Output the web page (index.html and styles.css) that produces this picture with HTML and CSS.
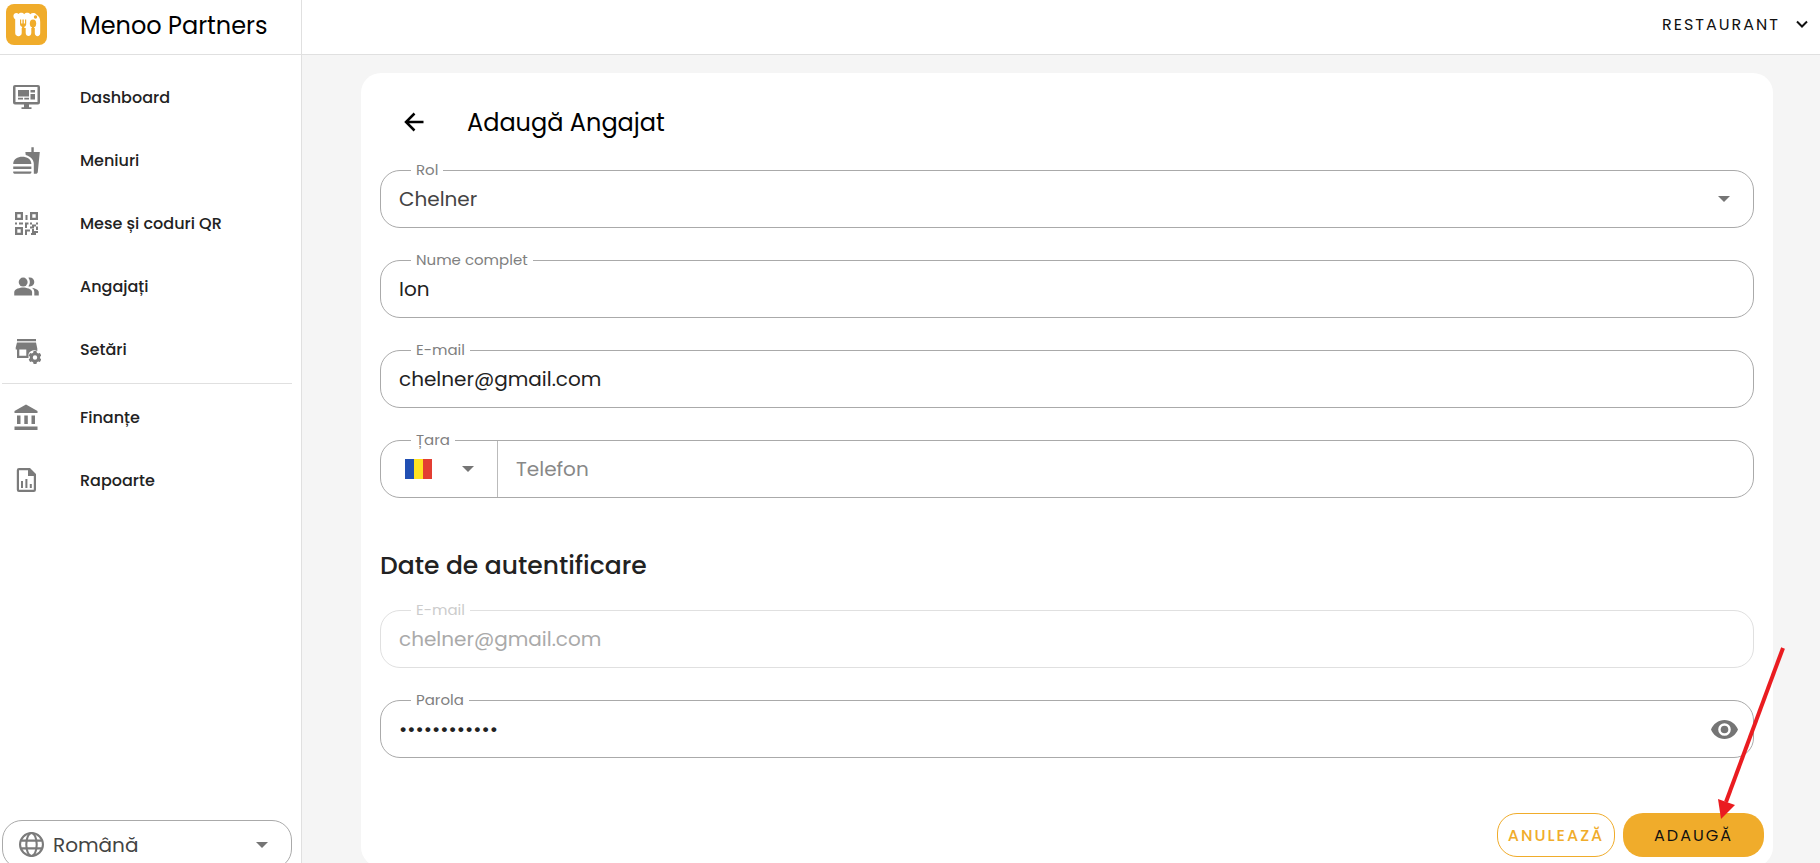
FILE: index.html
```html
<!DOCTYPE html>
<html lang="ro">
<head>
    <meta charset="UTF-8">
    <meta name="viewport" content="width=device-width, initial-scale=1.0">
    <title>Menoo Partners</title>
    <link rel="stylesheet" href="styles.css">
</head>
<body>
    <aside class="sidebar">
        <div class="brand">
            <svg class="logo" viewBox="0 0 41 41" aria-hidden="true">
                <rect width="41" height="41" rx="8" fill="#f0ac2b"/>
                <path fill="#fff" d="M9.200 15.200C6.500 13.500 7 9 10.300 9c1 0 1.700.400 2.200 1 1.300-1.700 4.300-1.700 5.700.200 1.500-1.900 4.600-1.900 6 0 1.800-1.500 4.600-1.500 6.200.300 2.800 1.800 3.800 4 3.800 7.500V29c0 4.200-5.400 4.200-5.400 0V24h-3.500v5c0 4-5.600 4-5.600 0v-5h-4v5c0 4.200-6.500 4.200-6.500 0z"/>
                <path fill="#f0ac2b" d="M14 15.500h1.200v4h1.200v-4h1.400v4H19v-4h1.200V20c0 1.600-.7 2.400-1.900 2.800V32h-2.200v-9.200c-1.300-.4-2.100-1.200-2.100-2.800z"/>
                <ellipse cx="27" cy="19.500" rx="3.200" ry="4" fill="#f0ac2b"/>
                <path fill="#f0ac2b" d="M26 22h2v10h-2z"/>
                <circle cx="29.500" cy="13" r="1.700" fill="#f0ac2b"/>
            </svg>
            <span class="brand-name">Menoo Partners</span>
        </div>

        <nav class="menu">
            <a class="menu-item" href="#">
                <svg class="icon" viewBox="0 0 29 29" aria-hidden="true">
                    <path fill-rule="evenodd" d="M3 2h23a2 2 0 0 1 2 2v15.500a2 2 0 0 1-2 2H17v2.800h2.500V26h-10v-1.700H12v-2.800H3a2 2 0 0 1-2-2V4a2 2 0 0 1 2-2zm.5 2v15h22V4z"/>
                    <path d="M6 7h11v6.500H6zM18.500 7H23v2.500h-4.500zM18.500 11H23v5.500h-4.500zM6 14.800h5v1.700H6zM12.300 14.800H17v1.700h-4.700z"/>
                </svg>
                <span>Dashboard</span>
            </a>
            <a class="menu-item" href="#">
                <svg class="icon" viewBox="0 0 24 24" aria-hidden="true">
                    <path d="M18.060 22.990h1.660c.840 0 1.530-.640 1.630-1.460L23 5.050h-5V1h-1.970v4.050h-4.970l.3 2.340c1.710.470 3.310 1.320 4.270 2.260 1.440 1.420 2.430 2.890 2.430 5.290v8.050zM1 21.990V21h15.030v.990c0 .550-.450 1-1.010 1H2.010c-.560 0-1.010-.450-1.010-1zm15.030-7c0-8-15.030-8-15.030 0h15.030zM1.020 17h15v2h-15z"/>
                </svg>
                <span>Meniuri</span>
            </a>
            <a class="menu-item" href="#">
                <svg class="icon" viewBox="0 0 29 29" aria-hidden="true">
                    <path fill-rule="evenodd" d="M3 3h8v8H3zm2.300 2.300v3.400h3.400V5.300zM18 3h8v8h-8zm2.300 2.300v3.400h3.400V5.300zM3 18h8v8H3zm2.300 2.300v3.400h3.400v-3.400z"/>
                    <path d="M13.500 6h2v5h-2zM3 13.500h2v2H3zM7 13.500h4v2H7zM13 13.500h3.500v2H15V19h-2zM18 13.500h2v2h-2zM24 13.500h2v2h-2zM20 15.500h4v2h-2v2h-4v-2h2zM13 20.500h5v2h-3V26h-2zM24 17.500h2V21h-2zM20 20h2v4h-2zM22 22h2v4h-5v-2h3zM24 22h2v2h-2z"/>
                </svg>
                <span>Mese și coduri QR</span>
            </a>
            <a class="menu-item" href="#">
                <svg class="icon" viewBox="-1 -1 26 26" aria-hidden="true">
                    <path d="M16.670 13.130C18.040 14.060 19 15.320 19 17v3h4v-3c0-2.180-3.570-3.470-6.330-3.870zM15 12c2.210 0 4-1.790 4-4s-1.790-4-4-4c-.470 0-.910.100-1.330.240C14.500 5.270 15 6.580 15 8s-.5 2.730-1.330 3.760c.420.140.860.240 1.330.240z"/>
                    <circle cx="9" cy="8" r="4"/>
                    <path d="M9 13c-2.670 0-8 1.340-8 4v3h16v-3c0-2.660-5.330-4-8-4z"/>
                </svg>
                <span>Angajați</span>
            </a>
            <a class="menu-item" href="#">
                <svg class="icon" viewBox="0 0 29 29" aria-hidden="true">
                    <path d="M5 4h19v2.200H5zM5 7.500h19l1.300 6V16c-3.500-1.600-7.300-.3-8.800 3v4H5v-8.500H3.700v-2zM7.300 14.500v6.300h7v-6.300z" fill-rule="evenodd"/>
                    <path fill-rule="evenodd" d="M21.600 16h2.800l.5 1.700 1.300.7 1.700-.4 1.400 2.400-1.200 1.300v1.600l1.200 1.300-1.400 2.400-1.700-.4-1.300.7-.5 1.700h-2.800l-.5-1.700-1.300-.7-1.700.4-1.400-2.400 1.200-1.300v-1.600l-1.200-1.300 1.400-2.400 1.700.4 1.300-.7zM23 20.300a2.200 2.200 0 1 0 0 4.400 2.200 2.200 0 0 0 0-4.400z"/>
                </svg>
                <span>Setări</span>
            </a>
            <hr class="menu-divider">
            <a class="menu-item" href="#">
                <svg class="icon" viewBox="0 0 29 29" aria-hidden="true">
                    <path d="M14 1.500 25.500 8v2h-23V8zM5 12.500h3.500v8.500H5zM12.300 12.500h3.500v8.500h-3.500zM19.500 12.500H23v8.500h-3.500zM2.500 23.500h23V27h-23z"/>
                </svg>
                <span>Finanțe</span>
            </a>
            <a class="menu-item" href="#">
                <svg class="icon" viewBox="0 0 29 29" aria-hidden="true">
                    <path fill-rule="evenodd" d="M7 2h11l6 6v15.800a2.200 2.200 0 0 1-2.200 2.200H7a2.200 2.200 0 0 1-2.200-2.200V4.200A2.200 2.200 0 0 1 7 2zm0 2.200v19.600h14.800V10H16V4.200z"/>
                    <path d="M9 15h2v7H9zM13.400 13h2v9h-2zM17.800 18h2v4h-2z"/>
                </svg>
                <span>Rapoarte</span>
            </a>
        </nav>

        <div class="language">
            <svg class="globe" viewBox="0 0 24 24" aria-hidden="true">
                <circle cx="12" cy="12" r="11"/>
                <ellipse cx="12" cy="12" rx="5" ry="11"/>
                <path d="M2 8.300h20M2 15.700h20"/>
            </svg>
            <select class="language-select" aria-label="Limba">
                <option>Română</option>
            </select>
            <svg class="caret" viewBox="0 0 12 6" aria-hidden="true"><path d="M0 0h12L6 6z"/></svg>
        </div>
    </aside>

    <div class="page">
        <header class="topbar">
            <button class="restaurant-button" type="button">
                Restaurant
                <svg class="chevron" viewBox="0 0 12 8" aria-hidden="true"><path d="M1 1.500l5 5 5-5"/></svg>
            </button>
        </header>

        <main class="content">
            <form class="card">
                <div class="card-header">
                    <button class="back-button" type="button" aria-label="Înapoi">
                        <svg viewBox="0 0 20 20" aria-hidden="true"><path d="M19.500 10H2M10.500 1.500L2 10l8.500 8.500"/></svg>
                    </button>
                    <h1>Adaugă Angajat</h1>
                </div>

                <div class="fields">
                    <div class="field">
                        <label for="role">Rol</label>
                        <select id="role" class="role-select">
                            <option>Chelner</option>
                        </select>
                        <svg class="caret" viewBox="0 0 12 6" aria-hidden="true"><path d="M0 0h12L6 6z"/></svg>
                    </div>
                    <div class="field">
                        <label for="name">Nume complet</label>
                        <input type="text" id="name" value="Ion">
                    </div>
                    <div class="field">
                        <label for="email">E-mail</label>
                        <input type="email" id="email" value="chelner@gmail.com">
                    </div>
                    <div class="field phone-field">
                        <label for="country">Țara</label>
                        <div class="country">
                            <select id="country" class="country-select">
                                <option value="RO">RO</option>
                            </select>
                            <svg class="flag" viewBox="0 0 27 20" aria-hidden="true">
                                <path fill="#214fb3" d="M0 0h9v20H0z"/>
                                <path fill="#ffe222" d="M9 0h9v20H9z"/>
                                <path fill="#e33e32" d="M18 0h9v20h-9z"/>
                            </svg>
                            <svg class="caret" viewBox="0 0 12 6" aria-hidden="true"><path d="M0 0h12L6 6z"/></svg>
                        </div>
                        <input type="tel" placeholder="Telefon" aria-label="Telefon">
                    </div>
                </div>

                <h2>Date de autentificare</h2>

                <div class="fields">
                    <div class="field disabled">
                        <label for="login">E-mail</label>
                        <input type="email" id="login" value="chelner@gmail.com" disabled>
                    </div>
                    <div class="field">
                        <label for="password">Parola</label>
                        <input type="password" id="password" value="parolachelnr">
                        <button class="eye-button" type="button" aria-label="Arată parola">
                            <svg viewBox="0 0 27 19" aria-hidden="true">
                                <path fill-rule="evenodd" d="M13.500 0C7.400 0 2.200 3.900 0 9.500 2.200 15.100 7.400 19 13.500 19S24.800 15.100 27 9.500C24.800 3.900 19.600 0 13.500 0zm0 15.800a6.300 6.300 0 1 1 0-12.600 6.300 6.300 0 0 1 0 12.600z"/>
                                <circle cx="13.500" cy="9.500" r="3.800"/>
                            </svg>
                        </button>
                    </div>
                </div>

                <div class="actions">
                    <button class="button cancel" type="button">Anulează</button>
                    <button class="button submit" type="submit">Adaugă</button>
                    <svg class="pointer" viewBox="0 0 68 172" aria-hidden="true">
                        <path d="M66 1L9 155" stroke="#ea1c20" stroke-width="4"/>
                        <path d="M1 152l17 6L4 172z" fill="#ea1c20"/>
                    </svg>
                </div>
            </form>
        </main>
    </div>
</body>
</html>
```
FILE: styles.css
```css
* {
    box-sizing: border-box;
}
body {
    margin: 0;
    height: 100vh;
    display: flex;
    overflow: hidden;
    background-color: #f5f5f5;
    color: #222;
    font-family: Poppins, Inter, sans-serif;
    font-size: 20px;
}
button, input, select {
    font: inherit;
    color: inherit;
    border: none;
    background: none;
    outline: none;
}
button {
    cursor: pointer;
    padding: 0;
}
select {
    appearance: none;
    cursor: pointer;
}

/* sidebar */
.sidebar {
    width: 302px;
    flex-shrink: 0;
    display: flex;
    flex-direction: column;
    background-color: #fff;
    border-right: 1px solid #e0e0e0;
}
.brand {
    height: 55px;
    flex-shrink: 0;
    display: flex;
    align-items: center;
    gap: 33px;
    padding: 0 6px 6px;
    border-bottom: 1px solid #e0e0e0;
}
.logo {
    width: 41px;
    height: 41px;
}
.brand-name {
    padding-top: 3px;
    color: #000;
    font-size: 24px;
}
.menu {
    flex: 1;
    padding-top: 11px;
}
.menu-item {
    height: 63px;
    display: flex;
    align-items: center;
    gap: 39px;
    padding-left: 12px;
    color: #222;
    font-size: 16px;
    font-weight: 500;
    text-decoration: none;
}
.icon {
    width: 29px;
    height: 29px;
    fill: #7b7b7b;
}
.menu-divider {
    margin: 2px 9px 2px 2px;
    border: none;
    border-top: 1px solid #e0e0e0;
}
.language {
    position: relative;
    flex-shrink: 0;
    height: 49px;
    margin: 0 9px -6px 2px;
    display: flex;
    align-items: center;
    border: 1px solid #aaa;
    border-radius: 20px;
    color: #444;
}
.globe {
    position: absolute;
    left: 16px;
    width: 25px;
    height: 25px;
    fill: none;
    stroke: #7b7b7b;
    stroke-width: 2;
    pointer-events: none;
}
.language-select {
    width: 100%;
    height: 100%;
    padding: 0 40px 0 50px;
}
.caret {
    position: absolute;
    right: 23px;
    width: 12px;
    height: 6px;
    fill: #757575;
    pointer-events: none;
}

/* top bar */
.page {
    flex: 1;
    min-width: 0;
    display: flex;
    flex-direction: column;
}
.topbar {
    height: 55px;
    flex-shrink: 0;
    display: flex;
    justify-content: flex-end;
    align-items: center;
    padding: 0 12px 6px 0;
    background-color: #fff;
    border-bottom: 1px solid #e0e0e0;
}
.restaurant-button {
    display: flex;
    align-items: center;
    gap: 16px;
    color: #111;
    font-size: 16px;
    letter-spacing: 2px;
    text-transform: uppercase;
}
.chevron {
    width: 12px;
    height: 8px;
    fill: none;
    stroke: #111;
    stroke-width: 2;
}

/* form */
.content {
    padding: 18px 47px 0 59px;
}
.card {
    padding: 19px 19px 10px;
    background-color: #fff;
    border-radius: 20px;
}
.card-header {
    height: 60px;
    display: flex;
    align-items: center;
    gap: 43px;
    margin-bottom: 18px;
    padding-left: 24px;
}
.back-button {
    width: 20px;
    height: 20px;
}
.back-button svg {
    display: block;
    fill: none;
    stroke: #000;
    stroke-width: 2.5;
}
h1 {
    margin: 0;
    color: #000;
    font-size: 24px;
    font-weight: 400;
}
h2 {
    margin: 52px 0 28px;
    font-size: 25px;
    line-height: 32px;
    font-weight: 500;
}
.fields {
    display: flex;
    flex-direction: column;
    gap: 32px;
}
.field {
    position: relative;
    height: 58px;
    display: flex;
    align-items: center;
    border: 1px solid #aaa;
    border-radius: 20px;
}
.field label {
    position: absolute;
    top: -10px;
    left: 30px;
    padding: 0 5px;
    background-color: #fff;
    color: #808080;
    font-size: 15px;
    line-height: 18px;
}
.field input,
.role-select {
    flex: 1;
    min-width: 0;
    height: 100%;
    padding: 0 18px;
}
.role-select {
    color: #444;
}
.field input::placeholder {
    color: #888;
    opacity: 1;
}
.country {
    position: relative;
    width: 117px;
    height: 100%;
    display: flex;
    align-items: center;
    border-right: 1px solid #bbb;
}
.country-select {
    width: 100%;
    height: 100%;
    color: transparent;
}
.flag {
    position: absolute;
    left: 24px;
    width: 27px;
    height: 20px;
    pointer-events: none;
}
.eye-button {
    margin-right: 15px;
}
.eye-button svg {
    display: block;
    width: 27px;
    height: 19px;
    fill: #757575;
}
.disabled {
    border-color: #e0e0e0;
}
.disabled label {
    color: #ccc;
}
.disabled input {
    color: #aaa;
}
.actions {
    position: relative;
    display: flex;
    justify-content: flex-end;
    gap: 8px;
    margin: 55px -10px 0 0;
}
.button {
    height: 44px;
    border-radius: 20px;
    font-size: 16px;
    font-weight: 500;
    letter-spacing: 2px;
    text-transform: uppercase;
}
.cancel {
    width: 118px;
    border: 1px solid #f0ac2b;
    color: #f0ac2b;
}
.submit {
    width: 141px;
    background-color: #f0ac2b;
    color: #111;
    font-weight: 400;
}
.pointer {
    position: absolute;
    right: -21px;
    bottom: 38px;
    width: 68px;
    height: 172px;
    fill: none;
    pointer-events: none;
}
```
